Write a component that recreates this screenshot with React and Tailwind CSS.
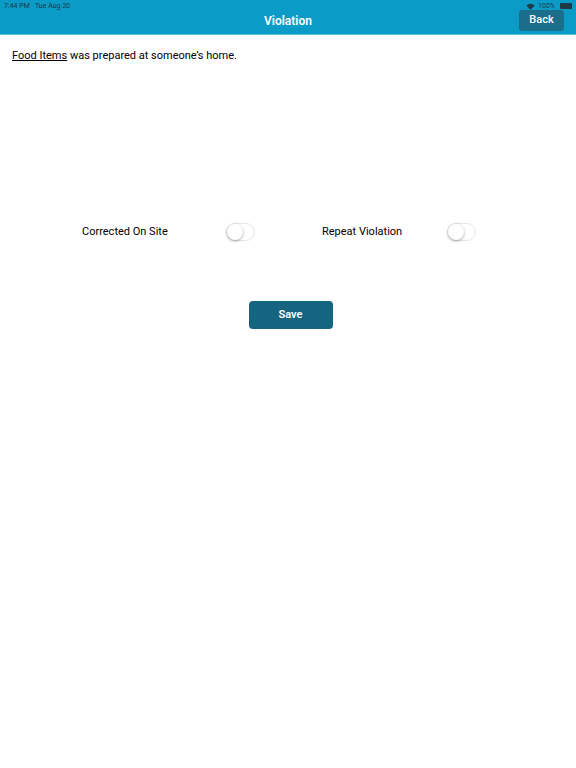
import { useState } from "react";

function Toggle({ on, onClick }) {
  return (
    <button
      onClick={onClick}
      className={`relative w-[29px] h-[18px] rounded-full border ${on ? "bg-[#4cd964] border-[#4cd964]" : "bg-white border-[#e5e5e5]"}`}
    >
      <span
        className={`absolute top-[0px] w-[16px] h-[16px] rounded-full bg-white shadow-[0_1px_3px_rgba(0,0,0,0.35)] ${on ? "left-[11px]" : "left-[0px]"}`}
      />
    </button>
  );
}

export default function App() {
  const [corrected, setCorrected] = useState(false);
  const [repeat, setRepeat] = useState(false);

  return (
    <div className="w-[576px] h-[768px] bg-white text-black font-['Roboto','Liberation_Sans',sans-serif]">
      {/* header */}
      <div className="bg-[#0a9bc7] h-[35px] border-b border-[#4fc0e0] relative">
        <div className="flex justify-between items-center px-[4px] pt-[1px] text-[7px] leading-[10px] text-[#1d3a47]">
          <span>7:44 PM&nbsp;&nbsp;&nbsp;Tue Aug 20</span>
          <span className="flex items-center gap-[3px]">
            <svg width="9" height="7" viewBox="0 0 12 9">
              <path d="M6 9 L0.5 3 A8 8 0 0 1 11.5 3 Z" fill="#1d3a47" />
            </svg>
            100%
            <span className="w-[12px] h-[6px] bg-[#1d3a47] rounded-[1px] ml-[2px]" />
          </span>
        </div>
        <div className="absolute inset-x-0 top-[12px] text-center text-white font-semibold text-[12px] leading-[18px]">
          Violation
        </div>
        <button className="absolute right-[12px] top-[10px] w-[45px] h-[21px] rounded-[3px] bg-[#1a6e8c] text-white text-[11px] font-medium">
          Back
        </button>
      </div>

      <p className="pl-[12px] pt-[13px] text-[11px] leading-[16px]">
        <span className="underline">Food Items</span> was prepared at someone’s home.
      </p>

      <div className="flex items-center mt-[158px] pl-[82px] h-[20px] text-[11px]">
        <span className="w-[144px]">Corrected On Site</span>
        <Toggle on={corrected} onClick={() => setCorrected(!corrected)} />
        <span className="w-[125px] ml-[67px]">Repeat Violation</span>
        <Toggle on={repeat} onClick={() => setRepeat(!repeat)} />
      </div>

      <div className="flex justify-center mt-[59px] pl-[5px]">
        <button className="w-[84px] h-[28px] rounded-[4px] bg-[#166580] text-white text-[11px] font-semibold">
          Save
        </button>
      </div>
    </div>
  );
}
